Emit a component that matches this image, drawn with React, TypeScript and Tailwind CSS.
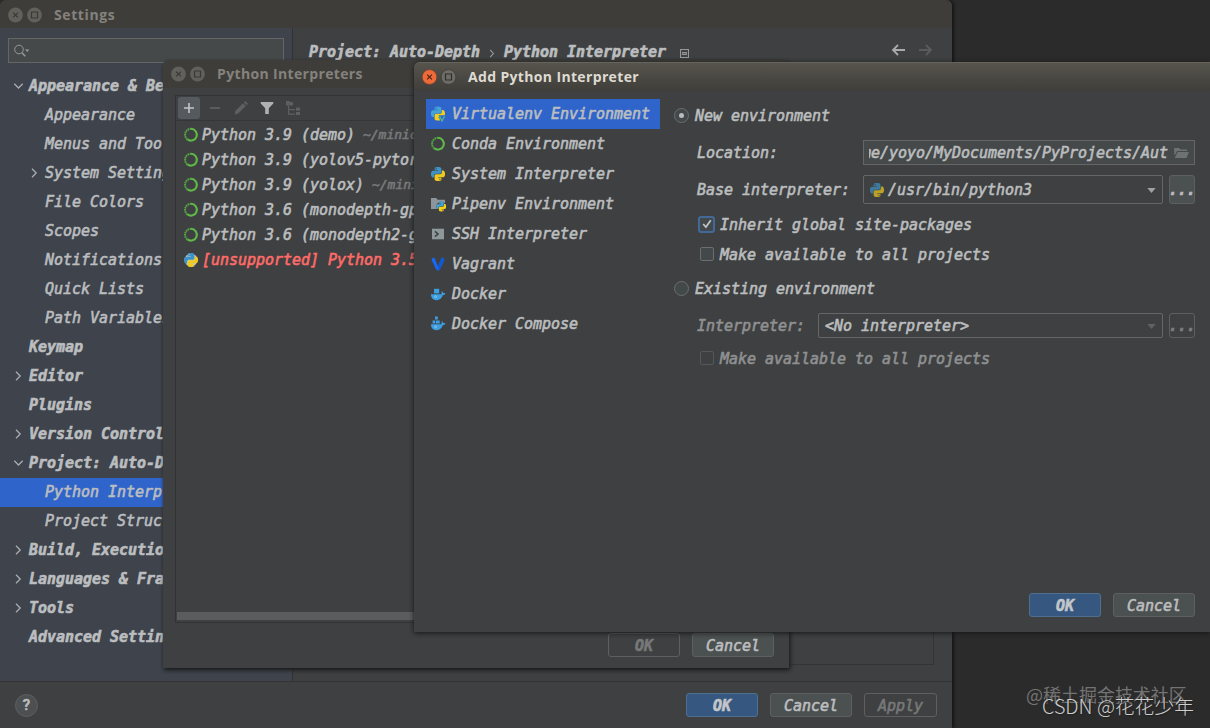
import type { ReactNode } from 'react';
import clsx from 'clsx';

const PY_HALF =
  'M14.25.18l.9.2.73.26.59.3.45.32.34.34.25.34.16.33.1.3.04.26.02.2-.01.13V8.5l-.05.63-.13.55-.21.46-.26.38-.3.31-.33.25-.35.19-.35.14-.33.1-.3.07-.26.04-.21.02H8.77l-.69.05-.59.14-.5.22-.41.27-.33.32-.27.35-.2.36-.15.37-.1.35-.07.32-.04.27-.02.21v3.06H3.17l-.21-.03-.28-.07-.32-.12-.35-.18-.36-.26-.36-.36-.35-.46-.32-.59-.28-.73-.21-.88-.14-1.05-.05-1.23.06-1.22.16-1.04.24-.87.32-.71.36-.57.4-.44.42-.33.42-.24.4-.16.36-.1.32-.05.24-.01h.16l.06.01h8.16v-.83H6.18l-.01-2.75-.02-.37.05-.34.11-.31.17-.28.25-.26.31-.23.38-.2.44-.18.51-.15.58-.12.64-.1.71-.06.77-.04.84-.02 1.27.05zm-6.3 1.98l-.23.33-.08.41.08.41.23.34.33.22.41.09.41-.09.33-.22.23-.34.08-.41-.08-.41-.23-.33-.33-.22-.41-.09-.41.09z';

function PythonIcon({ className = 'size-3.5' }: { className?: string }) {
  return (
    <svg viewBox="0 0 24 24" className={className}>
      <path d={PY_HALF} fill="#3f93c4" />
      <path d={PY_HALF} fill="#f0ca1e" transform="rotate(180 12 12)" />
    </svg>
  );
}

// Rounder python used for interpreters that can no longer be run
function UnsupportedIcon() {
  return (
    <svg viewBox="0 0 24 24" className="mx-px size-3.5">
      <circle cx="12" cy="12" r="11" fill="#b9cdd6" />
      <path d={PY_HALF} fill="#3f93c4" />
      <path d={PY_HALF} fill="#f0ca1e" transform="rotate(180 12 12)" />
    </svg>
  );
}

function VirtualenvIcon() {
  return (
    <svg viewBox="0 0 16 16" className="size-4">
      <g transform="translate(1 0.6) scale(0.58)">
        <path d={PY_HALF} fill="#45a3d6" />
        <path d={PY_HALF} fill="#f6cf18" transform="rotate(180 12 12)" />
      </g>
      <path d="M8.6 9.2h6.8l-2.2 6.4h-2.4z" fill="#2f65ca" />
      <path d="M9.6 10l2.4 5 2.6-5" fill="none" stroke="#4fae9b" strokeWidth="1.5" />
    </svg>
  );
}

function CondaIcon() {
  return (
    <svg viewBox="0 0 16 16" className="size-4" fill="none">
      <path d="M8 1.8a5.9 5.9 0 1 1-3.6 10.600" stroke="#5fb848" strokeWidth="2.1" />
      <path d="M4.4 12.4A5.9 5.9 0 0 1 8 1.8" stroke="#55a843" strokeWidth="2" strokeDasharray="1.6 0.6" />
    </svg>
  );
}

function PipenvIcon() {
  return (
    <svg viewBox="0 0 16 16" className="size-4">
      <path d="M1 2h5.2l1.5 1.8H15V13H1z" fill="#8b959b" />
      <circle cx="11.2" cy="10.6" r="4.9" fill="#3e4041" />
      <g transform="translate(6.4 5.6) scale(0.41)">
        <path d={PY_HALF} fill="#45a3d6" />
        <path d={PY_HALF} fill="#f6cf18" transform="rotate(180 12 12)" />
      </g>
    </svg>
  );
}

function SshIcon() {
  return (
    <svg viewBox="0 0 16 16" className="size-4">
      <path d="M2 2.7h12v10.6H2z" fill="#8e989c" />
      <path d="M5 5.3L8 8l-3 2.7" fill="none" stroke="#3e4041" strokeWidth="1.6" />
    </svg>
  );
}

function VagrantIcon() {
  return (
    <svg viewBox="0 0 16 16" className="size-4">
      <path d="M1.8 2.6l2-1 1.3.8v1.2L8 10.4l2.9-6.8V2.4l1.3-.8 2 1v1.8L10 13.3 8 14.8l-2-1.5L1.8 4.4z" fill="#1769f5" />
      <path d="M10.9 3.6V2.4l1.3-.8 2 1v1.8L10 13.3 8 14.8v-4.4z" fill="#1258d2" />
    </svg>
  );
}

function DockerIcon({ compose }: { compose?: boolean }) {
  return (
    <svg viewBox="0 0 16 16" className="size-4" fill="#3d9fe2">
      {compose ? (
        <path d="M5 .6h2.8v2.8H5zM2.6 4.6h2.7v2.8H2.6zM6 4.6h3.7v2.8H6z" />
      ) : (
        <path d="M4 2.8h5.2v4.6H4z" />
      )}
      <path d="M1 8.3h10.2c.7-.6.7-2.2.2-3.2 1.3.5 1.7 1.4 1.8 2 .9-.1 1.6.1 2.2.4-.5 1-1.5 1.5-2.6 1.5-.9 3.4-3 5.2-6.2 5.2C3 14.2 1 12 1 8.3z" />
      <circle cx="5.6" cy="10.7" r="1" fill="none" stroke="#a9d4f1" strokeWidth="0.6" />
    </svg>
  );
}

function Chevron({ open }: { open?: boolean }) {
  return (
    <svg viewBox="0 0 12 12" className="size-3" fill="none" stroke="#a9adb1" strokeWidth="1.3">
      {open ? <path d="M2.3 3.8L6.5 8l4.2-4.2" /> : <path d="M4 1.8L8.2 6 4 10.2" />}
    </svg>
  );
}

function WindowButtons({ active }: { active?: boolean }) {
  return (
    <svg viewBox="0 0 36 16" className="h-4 w-9 shrink-0" fill="none">
      <circle cx="7.5" cy="8" r="7.4" fill={active ? '#ee6a38' : '#62605b'} stroke={active ? '#57392c' : 'none'} strokeWidth="0.6" />
      <path d="M5.1 5.6l4.8 4.8m0-4.8l-4.8 4.8" stroke={active ? '#4b241a' : '#3a3935'} strokeWidth="1.2" />
      <circle cx="26.500" cy="8" r="7.4" fill={active ? '#6e6c66' : '#62605b'} stroke={active ? '#33322f' : 'none'} strokeWidth="0.6" />
      <path d="M23.5 5h6v6h-6z" stroke={active ? '#302f2c' : '#3a3935'} strokeWidth="1.2" />
    </svg>
  );
}

function Button({ children, kind = 'normal', className }: { children: ReactNode; kind?: 'normal' | 'primary' | 'disabled'; className: string }) {
  return (
    <button
      className={clsx(
        'flex h-6 items-center justify-center rounded-[3px] border pt-px italic',
        kind === 'primary' && 'border-[#4f6f90] bg-[#365880] font-bold text-[#c3c6c9]',
        kind === 'normal' && 'border-[#5e6060] bg-[#4b5051] text-[#bbbdbf]',
        kind === 'disabled' && 'border-[#5e6060] text-[#777879]',
        className
      )}
    >
      {children}
    </button>
  );
}

function Checkbox({ checked, disabled, children }: { checked?: boolean; disabled?: boolean; children: ReactNode }) {
  return (
    <div className={clsx('flex h-6 items-center pl-[26px]', disabled && 'text-[#8f9091]')}>
      <span
        className={clsx(
          'flex shrink-0 items-center justify-center border',
          checked ? '-ml-0.5 mr-[5px] size-[17px] rounded-[3px] border-2 border-[#43689a] bg-[#43494a]' : 'mr-1.5 size-3.5 rounded-[2px]',
          !checked && (disabled ? 'border-[#55585a]' : 'border-[#6b6e6f] bg-[#43494a]')
        )}
      >
        {checked && (
          <svg viewBox="0 0 12 12" className="size-3" fill="none" stroke="#c0c2c3" strokeWidth="1.8">
            <path d="M2.2 6l2.7 3L9.8 2.2" />
          </svg>
        )}
      </span>
      <span className="pt-px">{children}</span>
    </div>
  );
}

function Radio({ checked, children }: { checked?: boolean; children: ReactNode }) {
  return (
    <div className="flex items-center gap-1.5">
      <span className="flex size-[15px] items-center justify-center rounded-full border border-[#6b6e6f] bg-[#43494a]">
        {checked && <span className="size-[5px] rounded-full bg-[#b9bbbc]" />}
      </span>
      <span className="pt-px">{children}</span>
    </div>
  );
}

function Arrow({ disabled }: { disabled?: boolean }) {
  return (
    <svg viewBox="0 0 10 6" className="ml-auto mr-1.5 mt-px h-[5px] w-[9px]">
      <path d="M0 0h10L5 6z" fill={disabled ? '#5f6263' : '#9fa2a3'} />
    </svg>
  );
}

const tree = [
  { name: 'Appearance & Behavior', level: 0, arrow: 'open' },
  { name: 'Appearance', level: 1 },
  { name: 'Menus and Toolbars', level: 1 },
  { name: 'System Settings', level: 1, arrow: 'closed' },
  { name: 'File Colors', level: 1 },
  { name: 'Scopes', level: 1 },
  { name: 'Notifications', level: 1 },
  { name: 'Quick Lists', level: 1 },
  { name: 'Path Variables', level: 1 },
  { name: 'Keymap', level: 0 },
  { name: 'Editor', level: 0, arrow: 'closed' },
  { name: 'Plugins', level: 0 },
  { name: 'Version Control', level: 0, arrow: 'closed' },
  { name: 'Project: Auto-Depth', level: 0, arrow: 'open' },
  { name: 'Python Interpreter', level: 1, selected: true },
  { name: 'Project Structure', level: 1 },
  { name: 'Build, Execution', level: 0, arrow: 'closed' },
  { name: 'Languages & Frame', level: 0, arrow: 'closed' },
  { name: 'Tools', level: 0, arrow: 'closed' },
  { name: 'Advanced Settings', level: 0 },
];

const interpreters = [
  { name: 'Python 3.9 (demo)', path: '~/minic' },
  { name: 'Python 3.9 (yolov5-pytor' },
  { name: 'Python 3.9 (yolox)', path: '~/mini' },
  { name: 'Python 3.6 (monodepth-gp' },
  { name: 'Python 3.6 (monodepth2-g' },
];

const environments = [
  { name: 'Virtualenv Environment', icon: <VirtualenvIcon /> },
  { name: 'Conda Environment', icon: <CondaIcon /> },
  { name: 'System Interpreter', icon: <PythonIcon className="mx-px size-3.5" /> },
  { name: 'Pipenv Environment', icon: <PipenvIcon /> },
  { name: 'SSH Interpreter', icon: <SshIcon /> },
  { name: 'Vagrant', icon: <VagrantIcon /> },
  { name: 'Docker', icon: <DockerIcon /> },
  { name: 'Docker Compose', icon: <DockerIcon compose /> },
];

function SettingsWindow() {
  return (
    <div className="absolute left-0 top-0 flex h-[728px] w-[952px] flex-col rounded-t-md bg-[#3e4041] shadow-[2px_0_3px_#161616]">
      <div className="flex h-7 shrink-0 items-center rounded-t-md bg-[#3e3d39] pl-[7.5px] pt-px">
        <WindowButtons />
        <span className="ml-[10.5px] font-['Open_Sans'] text-[14px] font-bold not-italic tracking-[0.6px] text-[#85827d] [-webkit-text-stroke:0]">Settings</span>
      </div>
      <div className="flex min-h-0 flex-1">
        <div className="w-[293px] shrink-0 border-r border-[#313335] bg-[#3e434c]">
          <div className="ml-2 mt-2.5 flex h-[25px] w-[276px] items-center border border-[#646667] bg-[#45494a] pl-1">
            <svg viewBox="0 0 18 14" className="h-3.5 w-[18px]" fill="none" stroke="#989b9d">
              <circle cx="6" cy="5.5" r="4.3" />
              <path d="M9 8.7l3.2 3.5" strokeWidth="1.5" />
              <path d="M12 5.5h4.4l-2.2 2.5z" fill="#989b9d" stroke="none" />
            </svg>
          </div>
          <div className="mt-[9px]">
            {tree.map((item) => (
              <div
                key={item.name}
                className={clsx(
                  'flex h-[29px] items-center overflow-hidden whitespace-pre pb-[2px]',
                  item.level === 0 ? 'pl-3 font-bold' : 'pl-7',
                  item.selected && 'bg-[#2f65ca]'
                )}
              >
                <span className="flex w-[17px] shrink-0">{item.arrow && <Chevron open={item.arrow === 'open'} />}</span>
                {item.name}
              </div>
            ))}
          </div>
        </div>
        <div className="flex flex-1 flex-col">
          <div className="flex h-12 items-center pl-4 pr-[19px] font-bold">
            <span>Project: Auto-Depth</span>
            <svg viewBox="0 0 6 10" className="mx-[9px] mt-0.5 h-[9px] w-[6px]" fill="none" stroke="#9a9c9e" strokeWidth="1.2">
              <path d="M1 1l3.5 4L1 9" />
            </svg>
            <span>Python Interpreter</span>
            <svg viewBox="0 0 10 10" className="ml-3.5 mt-0.5 size-[9px]" fill="none" stroke="#96999b" strokeWidth="1.2">
              <path d="M.6.6h8.800v8.8H.6zM3 3.8h4v2.200H3z" />
            </svg>
            <svg viewBox="0 0 42 12" className="ml-auto mb-1 h-3 w-[42px]" fill="none" strokeWidth="1.8">
              <path d="M14 6H2m5-5L2 6l5 5" stroke="#a8abad" />
              <path d="M28 6h12m-5-5l5 5-5 5" stroke="#595c5e" />
            </svg>
          </div>
          <div className="mb-4 mr-[18px] flex-1 border-b border-r border-[#323436]" />
        </div>
      </div>
      <div className="flex h-[47px] shrink-0 items-center border-t border-[#313335] pl-[15px] pr-[15px]">
        <span className="flex size-[23px] items-center justify-center rounded-full border border-[#5e6060] bg-[#4c5052] font-['Roboto'] font-medium not-italic">?</span>
        <div className="ml-auto flex gap-3">
          <Button kind="primary" className="w-[72px]">OK</Button>
          <Button className="w-[82px]">Cancel</Button>
          <Button kind="disabled" className="w-[73px]">Apply</Button>
        </div>
      </div>
    </div>
  );
}

function InterpretersWindow() {
  return (
    <div className="absolute left-[163px] top-[60px] flex h-[608px] w-[626px] flex-col rounded-t-md bg-[#3e4041] shadow-[1px_2px_4px_#151617]">
      <div className="flex h-7 shrink-0 items-center rounded-t-md bg-[#3e3d39] pl-[7.5px]">
        <WindowButtons />
        <span className="ml-[10.5px] font-['Open_Sans'] text-[14px] font-bold not-italic tracking-[0.35px] text-[#85827d] [-webkit-text-stroke:0]">Python Interpreters</span>
      </div>
      <div className="ml-3 mr-3 mt-[7px] flex h-[528px] shrink-0 flex-col border border-[#313335]">
        <div className="flex h-[25px] shrink-0 items-center border-b border-[#343638] pl-0.5">
          <span className="flex size-[22px] items-center justify-center rounded-[3px] bg-[#555a5e]">
            <svg viewBox="0 0 12 12" className="size-3" stroke="#c3c5c6" strokeWidth="1.6">
              <path d="M6 1v10M1 6h10" />
            </svg>
          </span>
          <svg viewBox="0 0 12 12" className="ml-[9px] size-3" stroke="#606365" strokeWidth="1.6">
            <path d="M1 6h10" />
          </svg>
          <svg viewBox="0 0 14 14" className="ml-[13px] size-3.5" fill="#5d6062">
            <path d="M.5 13.5l1-3.8L9 2.2 11.8 5l-7.5 7.5zM9.8 1.4L11.2 0 14 2.8l-1.4 1.4z" />
          </svg>
          <svg viewBox="0 0 14 14" className="ml-3 size-3.5" fill="#afb1b3">
            <path d="M.7 1h12.6v1.5L8.8 7.2V13H5.2V7.2L.7 2.5z" />
          </svg>
          <svg viewBox="0 0 16 16" className="ml-[11px] size-4" fill="#5d6062">
            <path d="M1 1h3l1 1h3v3.5H1zM3 6h1.2v3H10v1.2H4.2v3.3H10v1.2H3zM11 7.5h4v3.2h-4zM11 12h4v3h-4z" />
          </svg>
        </div>
        <div className="flex-1 pl-[7px] pt-px">
          {interpreters.map((item) => (
            <div key={item.name} className="flex h-[25px] items-center whitespace-pre">
              <CondaIcon />
              <span className="ml-[3px]">{item.name}</span>
              {item.path && <span className="ml-2 pt-px text-[13px] text-[#77797a]">{item.path}</span>}
            </div>
          ))}
          <div className="flex h-[25px] items-center whitespace-pre text-[#ff6b68]">
            <UnsupportedIcon />
            <span className="ml-[3px]">[unsupported] Python 3.5</span>
          </div>
        </div>
        <div className="mb-[2px] ml-px h-2 bg-[#5a5c5d]" />
      </div>
      <div className="mt-[10px] flex justify-end gap-3 pr-[15px]">
        <Button kind="disabled" className="w-[72px] font-bold">OK</Button>
        <Button className="w-[82px]">Cancel</Button>
      </div>
    </div>
  );
}

function AddInterpreterWindow() {
  return (
    <div className="absolute left-[414px] top-[62px] flex h-[570px] w-[796px] flex-col rounded-tl-md bg-[#3e4041] shadow-[0_1px_5px_#151617]">
      <div className="flex h-[29px] shrink-0 items-center rounded-tl-md border-t border-[#66645c] bg-linear-to-b from-[#56544c] to-[#3f3e3a] pl-[7.5px]">
        <WindowButtons active />
        <span className="ml-[10.5px] font-['Open_Sans'] text-[14px] font-bold not-italic tracking-[0.35px] text-[#dfdbd2] [-webkit-text-stroke:0]">Add Python Interpreter</span>
      </div>
      <div className="flex flex-1 px-[12px] pt-2">
        <div className="w-[234px] shrink-0">
          {environments.map((env, i) => (
            <div key={env.name} className={clsx('flex h-[30px] items-center gap-1.5 whitespace-pre pl-1', i === 0 && 'bg-[#2f65ca]')}>
              {env.icon}
              {env.name}
            </div>
          ))}
        </div>
        <div className="ml-[14px] mr-[3px] flex flex-1 flex-col whitespace-pre">
          <div className="flex h-8 items-center">
            <Radio checked>New environment</Radio>
          </div>
          <div className="mt-[9px] flex h-[25px] items-center pl-[23px]">
            <span className="w-[166px]">Location:</span>
            <div className="flex h-full flex-1 items-center border border-[#646667] bg-[#45494a] pl-[5px] pr-[5px]">
              <div className="flex w-[299px] justify-end overflow-hidden">
                <span>me/yoyo/MyDocuments/PyProjects/Aut</span>
              </div>
              <svg viewBox="0 0 16 12" className="ml-auto h-3 w-4" fill="#6e7274">
                <path d="M1 1h5l1.5 1.5H14V4H4L1.5 9zM4.6 5H16l-2.5 6H1.8z" />
              </svg>
            </div>
          </div>
          <div className="mt-2.5 flex h-[29px] items-center pl-[23px]">
            <span className="w-[166px]">Base interpreter:</span>
            <div className="flex h-full w-[300px] items-center rounded-[2px] border border-[#646667] pl-1.5">
              <PythonIcon className="mr-1 size-3.5 opacity-70" />
              /usr/bin/python3
              <Arrow />
            </div>
            <div className="ml-1.5 flex h-full w-[26px] items-center justify-center rounded-[3px] border border-[#5e6060] bg-[#4b5051] font-bold">...</div>
          </div>
          <div className="mt-2">
            <Checkbox checked>Inherit global site-packages</Checkbox>
          </div>
          <div className="mt-1.5">
            <Checkbox>Make available to all projects</Checkbox>
          </div>
          <div className="mt-2.5 flex h-6 items-center">
            <Radio>Existing environment</Radio>
          </div>
          <div className="mt-[13px] flex h-[25px] items-center pl-[23px]">
            <span className="w-[121px] text-[#8f9091]">Interpreter:</span>
            <div className="flex h-full w-[345px] items-center rounded-[2px] border border-[#646667] pl-1.5">
              {'<No interpreter>'}
              <Arrow disabled />
            </div>
            <div className="ml-1.5 flex h-full w-[26px] items-center justify-center rounded-[3px] border border-[#5e6060] font-bold text-[#7d7f80]">...</div>
          </div>
          <div className="mt-2">
            <Checkbox disabled>Make available to all projects</Checkbox>
          </div>
        </div>
      </div>
      <div className="flex justify-end gap-3 pb-[15px] pr-[15px]">
        <Button kind="primary" className="w-[72px]">OK</Button>
        <Button className="w-[82px]">Cancel</Button>
      </div>
    </div>
  );
}

export default function App() {
  return (
    <div className="relative h-[728px] w-[1210px] overflow-hidden bg-[#2b2b2b] font-['DejaVu_Sans_Mono',monospace] text-[15px] italic leading-5 tracking-[-0.03px] text-[#bbbdbf] [-webkit-text-stroke:0.6px]">
      <SettingsWindow />
      <InterpretersWindow />
      <AddInterpreterWindow />
      {/* Watermarks */}
      <div className="absolute left-[1026px] top-[682px] whitespace-nowrap font-['Noto_Sans_CJK_SC',sans-serif] text-[18px] not-italic leading-6 text-[#737373] [-webkit-text-stroke:0]">
        @稀土掘金技术社区
      </div>
      <div className="absolute left-[1042px] top-[694px] whitespace-nowrap font-['Noto_Sans_CJK_SC',sans-serif] text-[19.8px] font-light not-italic leading-6 text-[#cfcfcf] [-webkit-text-stroke:0] [text-shadow:1px_1px_1px_#222]">
        CSDN @花花少年
      </div>
    </div>
  );
}
